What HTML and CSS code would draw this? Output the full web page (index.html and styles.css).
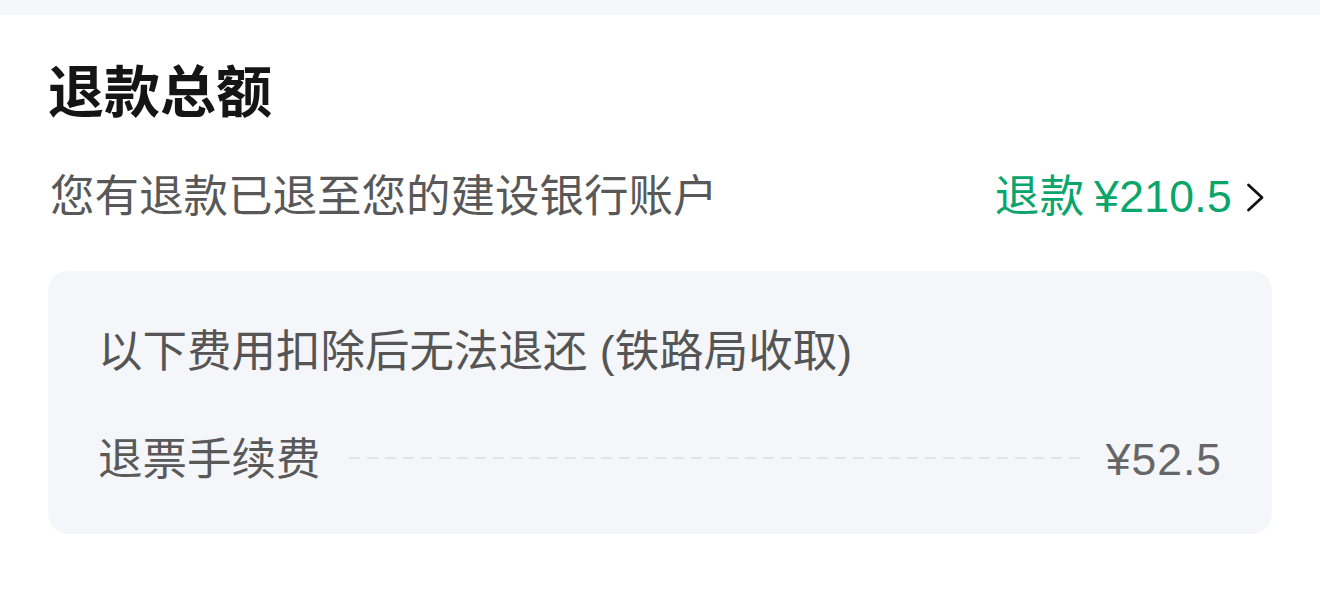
FILE: index.html
```html
<!DOCTYPE html>
<html lang="zh-CN">
<head>
<meta charset="utf-8">
<link rel="stylesheet" href="styles.css">
</head>
<body>
<div class="topband"></div>
<main class="section">
  <h1 class="title">退款总额</h1>
  <div class="summary">
    <span class="summary-text">您有退款已退至您的建设银行账户</span>
    <span class="summary-amount"><span class="amt">退款 ¥210.5</span>
      <svg class="chev" width="19" height="29" viewBox="0 0 19 29"><path d="M2.5 2 L16 14.5 L2.5 27" fill="none" stroke="#111" stroke-width="2.8" stroke-linecap="round" stroke-linejoin="round"/></svg>
    </span>
  </div>
  <div class="card">
    <div class="card-title">以下费用扣除后无法退还 (铁路局收取)</div>
    <div class="fee-row">
      <span class="fee-label">退票手续费</span>
      <span class="fee-dash"></span>
      <span class="fee-value">¥52.5</span>
    </div>
  </div>
</main>
</body>
</html>
```
FILE: styles.css
```css
* { box-sizing: border-box; }
html, body { margin: 0; padding: 0; background: #fff; }
body {
  font-family: "Liberation Sans", "Noto Sans CJK SC", sans-serif;
  width: 1320px;
  height: 592px;
  overflow: hidden;
}
.topband { height: 15px; background: #f5f6f8; }
.section { padding: 40px 48px 0 48px; }
.title {
  margin: 0;
  font-size: 56px;
  line-height: 76px;
  font-weight: 700;
  color: #151515;
  padding-left: 0;
}
.summary {
  margin-top: 36px;
  display: flex;
  justify-content: space-between;
  align-items: center;
  height: 60px;
  font-size: 44.5px;
  line-height: 60px;
  padding-left: 2px;
}
.summary-text { color: #585858; }
.summary-amount {
  color: #0aa56b;
  display: flex;
  align-items: center;
  gap: 14px;
  padding-right: 7px;
}
.amt { letter-spacing: 0.3px; word-spacing: -3px; }
.chev { display: block; }
.card {
  margin-top: 44px;
  background: #f5f6fa;
  border-radius: 20px;
  padding: 51px 50px 44px 50px;
}
.card-title {
  font-size: 44.5px;
  line-height: 60px;
  color: #555;
}
.fee-row {
  margin-top: 48px;
  display: flex;
  align-items: center;
  height: 60px;
  font-size: 44.5px;
  line-height: 60px;
}
.fee-label { color: #595959; }
.fee-dash {
  flex: 1;
  height: 2px;
  margin: 0 24px 0 28px;
  background-image: linear-gradient(to right, #e3e4e6 0 11px, transparent 11px 18px);
  background-size: 18px 2px;
  background-repeat: repeat-x;
  position: relative;
  top: -2px;
}
.fee-value { color: #666; letter-spacing: 1px; padding-right: 0; }
```
